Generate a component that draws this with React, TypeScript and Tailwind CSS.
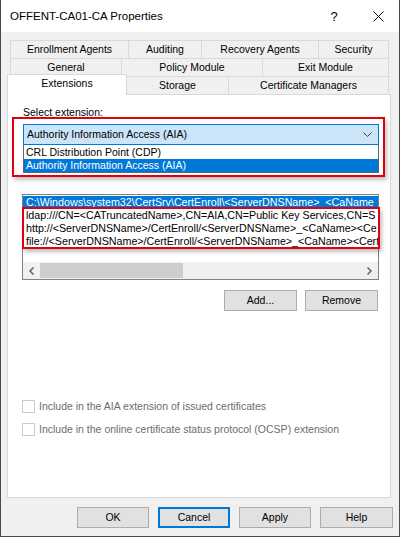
const ROW1 = [
  { label: 'Enrollment Agents', w: 'w-[118px]' },
  { label: 'Auditing', w: 'w-[73px]' },
  { label: 'Recovery Agents', w: 'w-[117px]' },
  { label: 'Security', w: 'w-[71px]' },
]

const ROW2 = [
  { label: 'General', w: 'w-[111px]' },
  { label: 'Policy Module', w: 'w-[141px]' },
  { label: 'Exit Module', w: 'w-[127px]' },
]

// only the part visible in the list box
const URLS = [
  'ldap:///CN=<CATruncatedName>,CN=AIA,CN=Public Key Services,CN=S',
  'http://<ServerDNSName>/CertEnroll/<ServerDNSName>_<CaName><Ce',
  'file://<ServerDNSName>/CertEnroll/<ServerDNSName>_<CaName><Cert',
]

function Tab({ label, w, last }: { label: string; w: string; last?: boolean }) {
  return (
    <div
      className={`${w} h-[18px] flex items-center justify-center border-t border-l border-[#d9d9d9] ${last ? 'border-r' : ''}`}
    >
      {label}
    </div>
  )
}

function Button({ label, focused, w = 'w-[73px]' }: { label: string; focused?: boolean; w?: string }) {
  return (
    <div
      className={`${w} h-[21px] flex items-center justify-center bg-[#e1e1e1] ${
        focused ? 'border-2 border-[#0078d7]' : 'border border-[#adadad]'
      }`}
    >
      {label}
    </div>
  )
}

function Checkbox({ label }: { label: string }) {
  return (
    <div className="flex items-center gap-[4px] text-[#6d6d6d]">
      <span className="w-[13px] h-[13px] border border-[#cccccc] bg-white" />
      <span>{label}</span>
    </div>
  )
}

export default function App() {
  return (
    <div className="w-[400px] h-[537px] bg-[#f0f0f0] border-x border-b border-[#4a4a4a] flex flex-col font-['Liberation_Sans',Arial,sans-serif] text-[10.5px] leading-[13px] text-black overflow-hidden">
      {/* title bar */}
      <div className="h-[32px] bg-white flex items-center shrink-0">
        <span className="pl-[9px] flex-1 text-[11.5px]">OFFENT-CA01-CA Properties</span>
        <span className="w-[46px] text-center text-[13px]">?</span>
        <span className="w-[42px] flex items-center justify-center">
          <svg width="11" height="11" viewBox="0 0 11 11" stroke="#111" strokeWidth="1">
            <path d="M0.5 0.5 L10.5 10.5 M10.5 0.5 L0.5 10.5" />
          </svg>
        </span>
      </div>

      {/* tabs */}
      <div className="pt-[8px] pl-[6px] flex flex-col">
        <div className="flex ml-[3px]">
          {ROW1.map((t, i) => (
            <Tab key={t.label} label={t.label} w={t.w} last={i === ROW1.length - 1} />
          ))}
        </div>
        <div className="flex ml-[3px]">
          {ROW2.map((t, i) => (
            <Tab key={t.label} label={t.label} w={t.w} last={i === ROW2.length - 1} />
          ))}
        </div>
        <div className="flex items-end h-[18px]">
          <div className="w-[120px] h-[21px] -mb-px relative z-10 bg-white border-t border-x border-[#d9d9d9] flex items-start justify-center pt-[2px]">
            Extensions
          </div>
          <div className="w-[101px] h-[18px] flex items-center justify-center border-t border-[#d9d9d9]">Storage</div>
          <div className="w-[161px] h-[18px] flex items-center justify-center border-t border-x border-[#d9d9d9]">
            Certificate Managers
          </div>
        </div>
      </div>

      {/* panel */}
      <div className="ml-[6px] w-[384px] h-[404px] bg-white border border-[#d9d9d9] relative flex flex-col">
        <div className="pl-[15px] mt-[11px]">Select extension:</div>

        {/* combo */}
        <div className="ml-[15px] mt-[5px] w-[356px] h-[21px] bg-[#cce4f7] border border-[#0078d7] flex items-center pl-[3px] pr-[6px]">
          <span className="flex-1">Authority Information Access (AIA)</span>
          <svg width="9" height="6" viewBox="0 0 9 6" fill="none" stroke="#444" strokeWidth="1">
            <path d="M0.5 0.5 L4.5 4.5 L8.5 0.5" />
          </svg>
        </div>
        <div className="ml-[15px] w-[356px] border-x border-b border-[#646464] bg-white">
          <div className="h-[14px] pl-[2px] flex items-center">CRL Distribution Point (CDP)</div>
          <div className="h-[13px] pl-[2px] flex items-center bg-[#0078d7] text-white">Authority Information Access (AIA)</div>
        </div>

        {/* list */}
        <div className="ml-[14px] mt-[21px] w-[357px] h-[86px] border border-[#828282] flex flex-col text-[10.7px]">
          <div className="flex-1 overflow-hidden pt-px">
            <div className="h-[13px] bg-[#0078d7] text-white pl-[3px] whitespace-nowrap overflow-hidden flex items-center">
              {'C:\\Windows\\system32\\CertSrv\\CertEnroll\\<ServerDNSName>_<CaName'}
            </div>
            {URLS.map((u) => (
              <div key={u} className="h-[13px] pl-[3px] whitespace-nowrap overflow-hidden flex items-center">
                {u}
              </div>
            ))}
          </div>
          {/* horizontal scrollbar */}
          <div className="h-[17px] bg-[#f0f0f0] flex items-center">
            <div className="w-[17px] flex items-center justify-center">
              <svg width="5" height="8" viewBox="0 0 5 8" fill="none" stroke="#606060" strokeWidth="1.5">
                <path d="M4.5 0.5 L1 4 L4.5 7.5" />
              </svg>
            </div>
            <div className="w-[143px] h-[15px] bg-[#cdcdcd]" />
            <div className="flex-1" />
            <div className="w-[17px] flex items-center justify-center">
              <svg width="5" height="8" viewBox="0 0 5 8" fill="none" stroke="#606060" strokeWidth="1.5">
                <path d="M0.5 0.5 L4 4 L0.5 7.5" />
              </svg>
            </div>
          </div>
        </div>

        {/* add / remove */}
        <div className="flex justify-end gap-[8px] mt-[10px] pr-[12px]">
          <Button label="Add..." />
          <Button label="Remove" />
        </div>

        {/* checkboxes */}
        <div className="ml-[14px] mt-[89px] flex flex-col gap-[10px]">
          <Checkbox label="Include in the AIA extension of issued certificates" />
          <Checkbox label="Include in the online certificate status protocol (OCSP) extension" />
        </div>

        {/* red annotation boxes */}
        <div className="absolute left-[4px] top-[22px] w-[373px] h-[60px] border-2 border-[#e0000f] shadow-[2px_3px_4px_rgba(0,0,0,0.25)]" />
        <div className="absolute left-[14px] top-[112px] w-[358px] h-[42px] border-2 border-[#e0000f] shadow-[2px_3px_4px_rgba(0,0,0,0.25)]" />
      </div>

      {/* footer buttons */}
      <div className="flex justify-end gap-[9px] mt-[9px] pr-[6px]">
        <Button label="OK" w="w-[72px]" />
        <Button label="Cancel" w="w-[72px]" focused />
        <Button label="Apply" w="w-[72px]" />
        <Button label="Help" w="w-[73px]" />
      </div>
    </div>
  )
}
